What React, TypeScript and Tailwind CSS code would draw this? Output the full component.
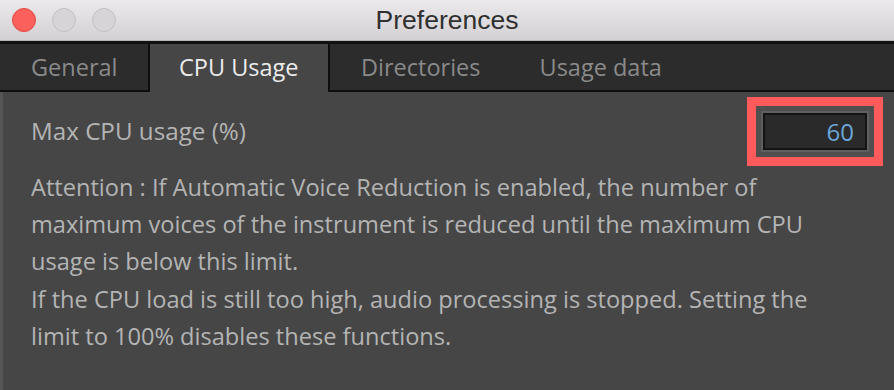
import React from "react";

export default function App() {
  const font = { fontFamily: '"Open Sans", "Noto Sans", sans-serif' };
  return (
    <div className="w-[894px] h-[390px] overflow-hidden flex flex-col bg-[#464646]" style={font}>
      {/* Title bar */}
      <div className="h-[41px] shrink-0 grid grid-cols-[1fr_auto_1fr] items-center bg-gradient-to-b from-[#ebe9eb] to-[#d3d1d3] border-b border-[#b8b6b8]">
        <div className="flex items-center gap-[16px] pl-[12px]">
          <div className="w-[24px] h-[24px] rounded-full bg-[#fc605c] border border-[#e2463f]" />
          <div className="w-[24px] h-[24px] rounded-full bg-[#d6d4d6] border border-[#c3c1c3]" />
          <div className="w-[24px] h-[24px] rounded-full bg-[#d6d4d6] border border-[#c3c1c3]" />
        </div>
        <div
          className="text-[26.5px] text-[#303030] leading-none pt-[1px]"
          style={{ fontFamily: '"Liberation Sans", Arial, sans-serif' }}
        >
          Preferences
        </div>
        <div />
      </div>
      {/* Tab bar */}
      <div className="h-[51px] shrink-0 flex border-t-[3px] border-[#111]">
        <div className="w-[150px] flex items-center pl-[31px] pt-[1px] bg-[#2c2c2c] border-r-2 border-b-2 border-[#0e0e0e] text-[23.5px] text-[#8a8a8a]">
          General
        </div>
        <div className="w-[178px] flex items-center pl-[29px] pb-[1px] bg-[#464646] text-[23.5px] text-[#ececec]">
          CPU Usage
        </div>
        <div className="flex-1 flex items-center gap-[59px] pl-[31px] pt-[1px] bg-[#2c2c2c] border-l-2 border-b-2 border-[#0e0e0e] text-[23.5px] text-[#8a8a8a]">
          <span>Directories</span>
          <span>Usage data</span>
        </div>
      </div>
      {/* Content */}
      <div className="flex-1 flex flex-col bg-[#464646] border-l-[3px] border-[#565656] pl-[28px] pr-[11px] pt-[5px]">
        <div className="flex items-center justify-between">
          <div className="text-[24.2px] text-[#b4b4b4]">Max CPU usage (%)</div>
          <div className="border-[9px] border-[#fd5b5b] bg-[#4f4f4f] p-[5px]">
            <div className="border-2 border-[#5f5f5f]">
              <div className="w-[104px] h-[37px] border-2 border-[#141414] bg-[#2a2a2a] flex items-center justify-end pr-[11px] text-[24px] text-[#6aa7d8]">
                60
              </div>
            </div>
          </div>
        </div>
        <div className="mt-[3px] text-[23.6px] leading-[37.2px] text-[#b4b4b4] whitespace-nowrap">
          <p>
            Attention : If Automatic Voice Reduction is enabled, the number of
            <br />
            maximum voices of the instrument is reduced until the maximum CPU
            <br />
            usage is below this limit.
          </p>
          <p>
            If the CPU load is still too high, audio processing is stopped. Setting the
            <br />
            limit to 100% disables these functions.
          </p>
        </div>
      </div>
    </div>
  );
}
